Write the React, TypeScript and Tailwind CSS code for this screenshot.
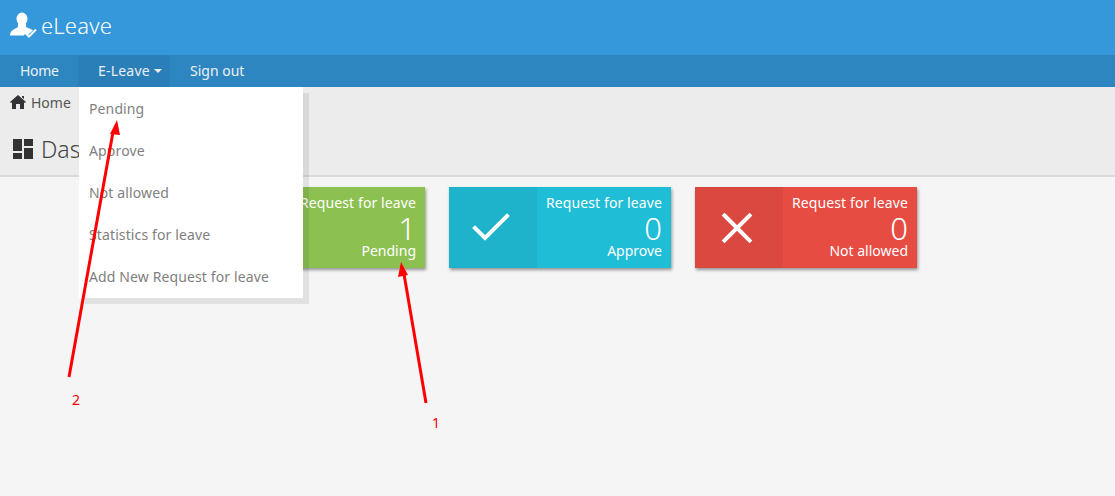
import { Check, X } from "lucide-react";

const menu = ["Pending", "Approve", "Not allowed", "Statistics for leave", "Add New Request for leave"];

const cards = [
  { title: "Request for leave", count: "1", label: "Pending", bg: "bg-[#8cc152]", dark: "bg-[#85b84e]", icon: null },
  { title: "Request for leave", count: "0", label: "Approve", bg: "bg-[#1fbdd6]", dark: "bg-[#1eb3cb]", icon: <Check size={48} strokeWidth={4} absoluteStrokeWidth strokeLinecap="square" strokeLinejoin="miter" /> },
  { title: "Request for leave", count: "0", label: "Not allowed", bg: "bg-[#e74c43]", dark: "bg-[#db4840]", icon: <X size={50} strokeWidth={4} absoluteStrokeWidth strokeLinecap="square" /> },
];

function Logo() {
  return (
    <svg width="27" height="27" viewBox="0 0 27 27" fill="#fff">
      <ellipse cx="12" cy="7" rx="5.500" ry="6.500" />
      <path d="M8 12h8v3c2 1 5 1.500 7 3.500l-5 4-1.500-1.500-3 2.500H0c0-3.500 2-5.500 4.500-6.500L8 15z" />
      <path d="M15.500 21l3.500 3.500 7-7" fill="none" stroke="#fff" strokeWidth="2" />
    </svg>
  );
}

function Arrows() {
  return (
    <svg className="absolute inset-0 z-20 pointer-events-none" width="1115" height="496">
      <line x1="69" y1="377" x2="113" y2="132" stroke="#ff0000" strokeWidth="3" />
      <polygon points="117,120 110,134 120,135" fill="#ff0000" />
      <line x1="426" y1="403" x2="404" y2="274" stroke="#ff0000" strokeWidth="3" />
      <polygon points="401,262 398,277 408,275" fill="#ff0000" />
    </svg>
  );
}

export default function App() {
  return (
    <div className="relative h-[496px] w-[1115px] overflow-hidden bg-[#f5f5f5] font-['Noto_Sans',sans-serif]">
      <header className="flex h-[55px] items-center gap-[4px] bg-[#3498db] pl-[10px] pb-[5px] text-white">
        <Logo />
        <span className="text-[22px] font-light tracking-[0.2px]">eLeave</span>
      </header>
      <nav className="flex h-[32px] bg-[#2e86c1] text-[14px] text-[#ecf0f1]">
        <a className="flex w-[78px] items-center pl-[20px] pb-[1px] tracking-[-0.3px]">Home</a>
        <div className="relative w-[92px]">
          <a className="flex h-full items-center gap-[4px] bg-[#2b7fb8] pl-[20px] pb-[1px] tracking-[0.2px]">
            E-Leave
            <span className="border-x-4 border-t-4 border-x-transparent border-t-[#ecf0f1]" />
          </a>
          <ul className="absolute left-[1px] top-[32px] z-10 w-[224px] bg-white pt-[1px] text-[14px] tracking-[0.12px] text-[#7f7f7f] shadow-[6px_6px_0_rgba(0,0,0,0.08)]">
            {menu.map((m) => (
              <li key={m} className="flex h-[42px] items-center pl-[10px] pb-[2px]">{m}</li>
            ))}
          </ul>
        </div>
        <a className="flex items-center pl-[20px] pb-[1px]">Sign out</a>
      </nav>
      <section className="h-[90px] border-b-2 border-[#d9d9d9] bg-[#ececec] text-[#444]">
        <div className="flex h-[32px] items-center gap-[5px] pl-[10px] pb-[2px] text-[14px] text-[#555]">
          <svg width="16" height="14" viewBox="0 0 16 14" fill="#333">
            <path d="M8 0l8 7-1 1-1-.8V14h-4V9H6v5H2V7.200L1 8 0 7zM12 1h2v3l-2-1.800z" />
          </svg>
          Home
        </div>
        <div className="flex items-center gap-[8px] pl-[13px] pt-[13px] text-[23px] font-light">
          <svg width="20" height="20" viewBox="0 0 20 20" fill="#333">
            <path d="M0 0h9v12H0zM0 14h9v6H0zM11 0h9v7h-9zM11 9h9v11h-9z" />
          </svg>
          Dashboard
        </div>
      </section>
      <main className="flex gap-[24px] pl-[203px] pt-[10px]">
        {cards.map((c) => (
          <div key={c.label} className={`flex h-[81px] w-[222px] text-white shadow-[1px_2px_3px_rgba(0,0,0,0.4)] ${c.bg}`}>
            <div className={`flex w-[88px] items-center justify-center pr-[4px] ${c.dark}`}>{c.icon}</div>
            <div className="flex flex-1 flex-col items-end pr-[9px] pt-[6px] text-[14px] leading-[20px]">
              <span className="tracking-[0.1px]">{c.title}</span>
              <span className="text-[31px] font-light leading-[30px]">{c.count}</span>
              <span className="-mt-[2px]">{c.label}</span>
            </div>
          </div>
        ))}
      </main>
      <Arrows />
      <span className="absolute z-20 left-[72px] top-[392px] text-[14px] leading-[16px] text-[#ff0000]">2</span>
      <span className="absolute z-20 left-[432px] top-[415px] text-[14px] leading-[16px] text-[#ff0000]">1</span>
    </div>
  );
}
